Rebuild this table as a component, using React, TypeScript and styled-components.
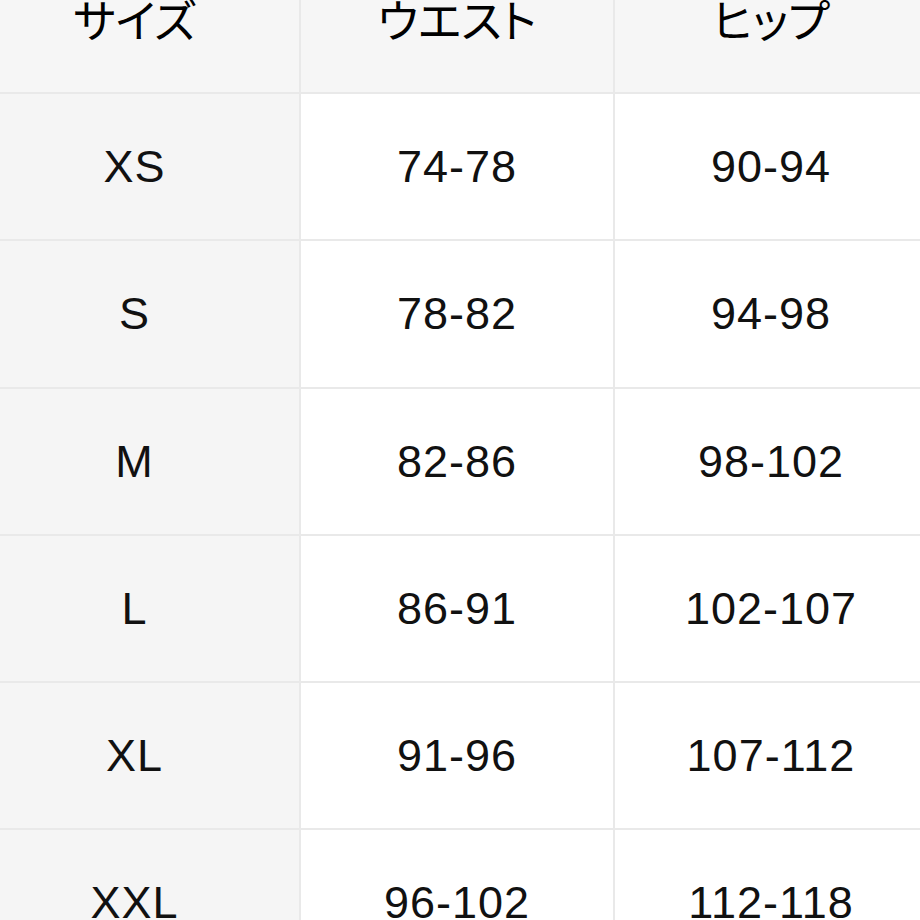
import styled, { createGlobalStyle } from 'styled-components';

const GlobalStyle = createGlobalStyle`
  html, body {
    margin: 0;
    padding: 0;
    background: #ffffff;
    overflow: hidden;
  }
  body {
    font-family: "Liberation Sans", "Noto Sans CJK JP", sans-serif;
  }
`;

const headers = ['サイズ', 'ウエスト', 'ヒップ'];

const rows = [
  ['XS', '74-78', '90-94'],
  ['S', '78-82', '94-98'],
  ['M', '82-86', '98-102'],
  ['L', '86-91', '102-107'],
  ['XL', '91-96', '107-112'],
  ['XXL', '96-102', '112-118'],
];

const App = () => {
  return (
    <>
      <GlobalStyle />
      <Grid>
        {headers.map((h) => (
          <HeadCell key={h}>{h}</HeadCell>
        ))}
        {rows.map((row) =>
          row.map((value, i) => (
            <Cell key={row[0] + i} $label={i === 0}>
              {value}
            </Cell>
          ))
        )}
      </Grid>
    </>
  );
};

export default App;

const Grid = styled.div`
  display: grid;
  grid-template-columns: 331px 314px 314px;
  grid-auto-rows: 147.2px;
  margin-left: -30px;
  margin-top: -53px;
  width: 959px;
`;

const BaseCell = styled.div`
  box-sizing: border-box;
  display: flex;
  align-items: center;
  justify-content: center;
  border-right: 2px solid #e9e9e9;
  border-bottom: 2px solid #e9e9e9;
  font-size: 45px;
  line-height: 1;
`;

const HeadCell = styled(BaseCell)`
  background: #f6f6f6;
  color: #000000;
  font-family: "Noto Sans CJK JP", sans-serif;
  font-feature-settings: "palt";
  padding-bottom: 2px;
`;

const Cell = styled(BaseCell)<{ $label: boolean }>`
  background: ${(p) => (p.$label ? '#f5f5f5' : '#ffffff')};
  color: #111111;
  letter-spacing: 1px;
`;
